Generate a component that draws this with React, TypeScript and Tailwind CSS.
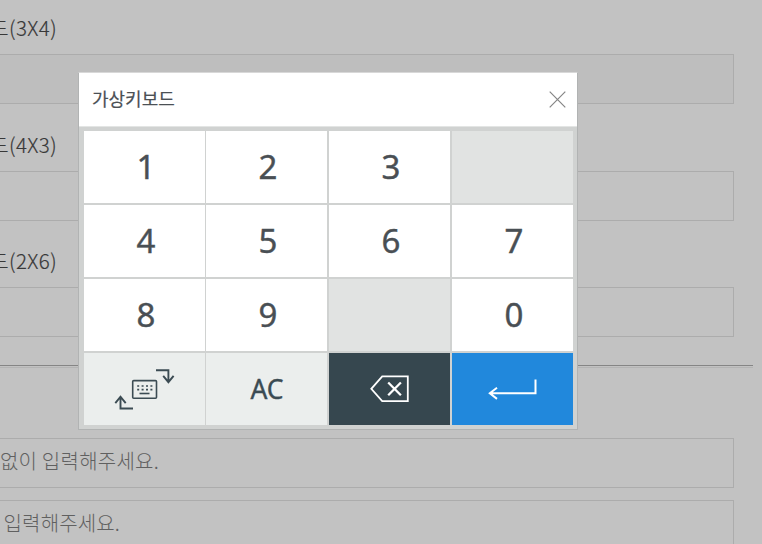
import React from 'react';

const korean = "font-['Noto_Sans_CJK_KR',sans-serif]";

function Field({ label, filled }: { label: string; filled?: boolean }) {
  return (
    <div>
      <div className="flex h-[50px] w-[57px] items-center justify-end whitespace-nowrap pb-[3px] text-[20.5px] font-light tracking-[0.4px] text-[#383838] [-webkit-text-stroke:0.2px_#383838]">
        {label}
      </div>
      <div
        className={
          filled
            ? 'h-[50px] w-[734px] border border-l-0 border-[#acacac] bg-[#bebebe]'
            : 'h-[50px] w-[734px] border border-l-0 border-[#acacac]'
        }
      />
    </div>
  );
}

function Hint({ text, narrow }: { text: string; narrow?: boolean }) {
  return (
    <div className="h-[50px] w-[734px] shrink-0 border border-l-0 border-[#acacac]">
      <div
        className={
          narrow
            ? 'flex h-[44px] w-[120px] items-center justify-end whitespace-nowrap text-[20px] font-light tracking-[0.15px] text-[#606060]'
            : 'flex h-[44px] w-[159px] items-center justify-end whitespace-nowrap text-[20px] font-light tracking-[0.25px] text-[#606060]'
        }
      >
        {text}
      </div>
    </div>
  );
}

const digits = ['1', '2', '3', '', '4', '5', '6', '7', '8', '9', '', '0'];

function DigitKey({ value }: { value: string }) {
  if (!value) return <div className="bg-[#e1e3e2]" />;
  return (
    <button className="flex items-center justify-center bg-white pb-[2px] pl-[3px] font-['Noto_Sans',sans-serif] text-[33px] leading-none text-[#494f54] [-webkit-text-stroke:0.4px_#494f54]">
      {value}
    </button>
  );
}

function SwapIcon() {
  return (
    <svg width="121" height="72" viewBox="84 353 121 72" fill="none" stroke="#3b4b53">
      <rect x="132.7" y="380.6" width="23.8" height="17.6" rx="1" strokeWidth="1.6" />
      <path d="M137.2 386h15.6M137.2 389.6h15.6" strokeWidth="1.7" strokeDasharray="2 2.4" />
      <path d="M139.5 393.5h10" strokeWidth="1.6" />
      <path d="M156 370.2h12.4v12M163.2 375.8l5.2 6.4 5.2-6.4" strokeWidth="1.9" />
      <path d="M133 408.5h-12.5V397M115.3 403.1l5.2-6.4 5.2 6.4" strokeWidth="1.9" />
    </svg>
  );
}

export default function App() {
  return (
    <div className={`relative h-[544px] w-[762px] overflow-hidden bg-[#c2c2c2] ${korean}`}>
      <div className="flex flex-col pt-[4px]">
        <Field label="드(3X4)" filled />
        <div className="h-[17px]" />
        <Field label="드(4X3)" />
        <div className="h-4" />
        <Field label="드(2X6)" />
        <div className="mt-[28px] h-[3px] w-[753px] border-t border-b border-t-[#858585] border-b-[#b4b4b4]" />
        <div className="mt-[70px] flex flex-col gap-3">
          <Hint text="없이 입력해주세요." />
          <Hint text="입력해주세요." narrow />
        </div>
      </div>

      <div className="absolute left-[78px] top-[72px] w-[500px] border border-[#b1b3b3] border-t-[#d8d8d8] bg-[#d0d2d1]">
        <div className="flex h-[54px] items-center justify-between border-b border-[#e3e5e4] bg-white pl-[13px] pr-[11px]">
          <h1 className="pb-[3px] text-[18px] leading-none text-[#4b5055] [-webkit-text-stroke:0.2px_#4b5055]">
            가상키보드
          </h1>
          <svg className="mb-px" width="17" height="17" viewBox="0 0 17 17" fill="none" stroke="#858585" strokeWidth="1.2">
            <path d="M.7.7l15.6 15.6M16.3.7L.7 16.3" />
          </svg>
        </div>
        <div className="grid grid-cols-[121px_122px_121px_121px] grid-rows-[72px_72px_72px_72px] gap-y-[2px] py-1 pl-[5px]">
          {[...digits, 'swap', 'clear', 'delete', 'enter'].map((key, i) => {
            const spacing =
              i % 4 === 0
                ? 'grid w-[121px]'
                : i % 4 === 1
                  ? 'ml-[1px] grid w-[121px]'
                  : i % 4 === 2
                    ? 'ml-[2px] grid w-[121px]'
                    : 'ml-[4px] grid w-[121px]';
            return (
              <div key={i} className={spacing}>
                {key === 'swap' ? (
                  <button className="flex items-center justify-center bg-[#ebeeed]">
                    <SwapIcon />
                  </button>
                ) : key === 'clear' ? (
                  <button className="flex items-center justify-center bg-[#ebeeed] pl-px font-['Noto_Sans',sans-serif] text-[26.5px] leading-none text-[#3b4b53] [-webkit-text-stroke:0.35px_#3b4b53]">
                    AC
                  </button>
                ) : key === 'delete' ? (
                  <button className="flex items-center justify-center bg-[#36474f]">
                    <svg width="39" height="28" viewBox="0 0 39 28" fill="none" stroke="white" strokeWidth="1.8">
                      <path d="M12.2 1.3H37.8V26.2H12.2L1.3 13.8z" />
                      <path d="M18.2 7.5l12.7 12.7M30.9 7.5L18.2 20.2" strokeWidth="2.3" />
                    </svg>
                  </button>
                ) : key === 'enter' ? (
                  <button className="flex items-center justify-center bg-[#2188dc]">
                    <svg width="49" height="22" viewBox="0 0 49 22" fill="none" stroke="white" strokeWidth="2">
                      <path d="M47.5 1.5v13.8H1.8M9 9.7l-7.2 5.6L9 20.9" />
                    </svg>
                  </button>
                ) : (
                  <DigitKey value={key} />
                )}
              </div>
            );
          })}
        </div>
      </div>
    </div>
  );
}
